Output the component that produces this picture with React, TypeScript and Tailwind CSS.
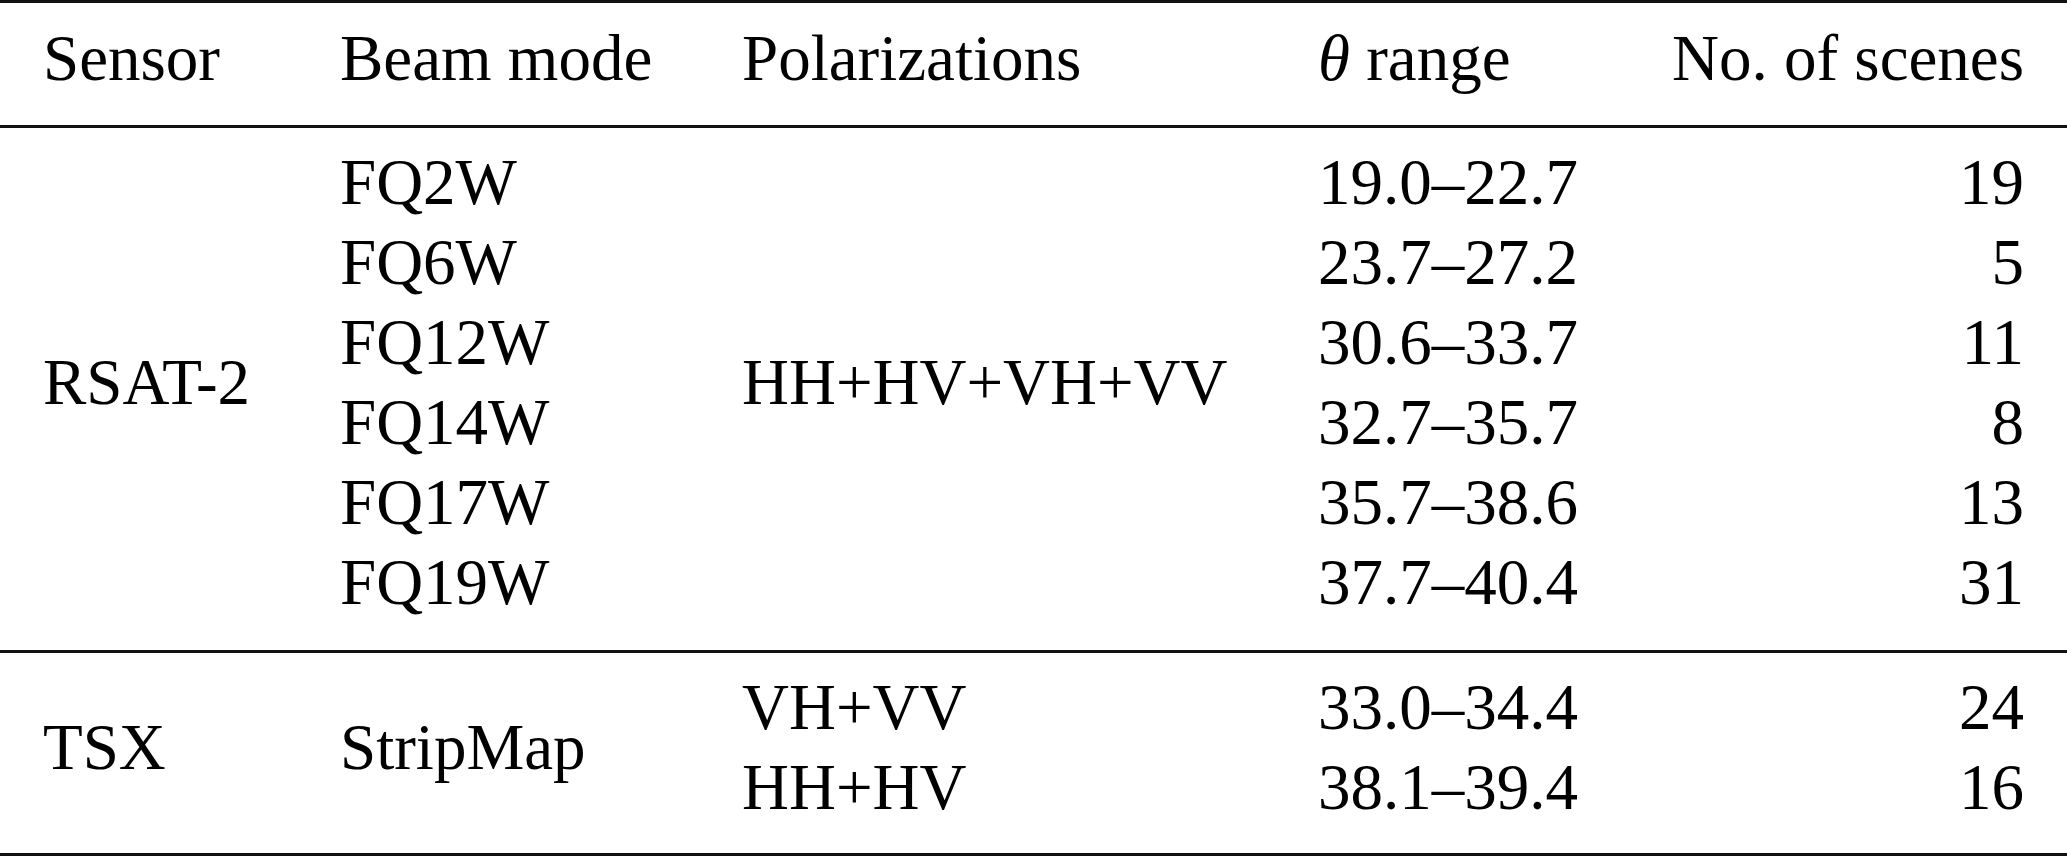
const rsat = [
  { mode: "FQ2W", range: "19.0–22.7", n: 19 },
  { mode: "FQ6W", range: "23.7–27.2", n: 5 },
  { mode: "FQ12W", range: "30.6–33.7", n: 11 },
  { mode: "FQ14W", range: "32.7–35.7", n: 8 },
  { mode: "FQ17W", range: "35.7–38.6", n: 13 },
  { mode: "FQ19W", range: "37.7–40.4", n: 31 },
];

const tsx = [
  { pol: "VH+VV", range: "33.0–34.4", n: 24 },
  { pol: "HH+HV", range: "38.1–39.4", n: 16 },
];

// column template shared by header and body sections
const cols = "grid grid-cols-[297px_402px_576px_1fr_auto]";

function Rule() {
  return <div className="h-[3px] w-full bg-[#111]" />;
}

export default function App() {
  return (
    <div className="h-[857px] w-[2067px] bg-white font-['Liberation_Serif',serif] text-[65px] leading-[80px] text-black">
      <Rule />

      {/* header */}
      <div className={`${cols} px-[43px] pt-[15px] pb-[27px]`}>
        <div>Sensor</div>
        <div>Beam mode</div>
        <div>Polarizations</div>
        <div>
          <span className="italic">θ</span> range
        </div>
        <div className="text-right">No. of scenes</div>
      </div>

      <Rule />

      {/* RSAT-2 block */}
      <div className={`${cols} grid-rows-[repeat(6,80px)] px-[43px] pt-[14px] pb-[28px]`}>
        <div className="row-span-6 flex items-center">RSAT-2</div>
        {rsat.map((r, i) => (
          <div key={r.mode} className="col-start-2" style={{ gridRow: i + 1 }}>
            {r.mode}
          </div>
        ))}
        <div className="col-start-3 row-span-6 row-start-1 flex items-center">
          HH+HV+VH+VV
        </div>
        {rsat.map((r, i) => (
          <div key={r.range} className="col-start-4" style={{ gridRow: i + 1 }}>
            {r.range}
          </div>
        ))}
        {rsat.map((r, i) => (
          <div key={r.mode + "n"} className="col-start-5 text-right" style={{ gridRow: i + 1 }}>
            {r.n}
          </div>
        ))}
      </div>

      <Rule />

      {/* TSX block */}
      <div className={`${cols} grid-rows-[repeat(2,80px)] px-[43px] pt-[14px] pb-[26px]`}>
        <div className="row-span-2 flex items-center">TSX</div>
        <div className="row-span-2 flex items-center">StripMap</div>
        {tsx.map((r, i) => (
          <div key={r.pol} className="col-start-3" style={{ gridRow: i + 1 }}>
            {r.pol}
          </div>
        ))}
        {tsx.map((r, i) => (
          <div key={r.range} className="col-start-4" style={{ gridRow: i + 1 }}>
            {r.range}
          </div>
        ))}
        {tsx.map((r, i) => (
          <div key={r.pol + "n"} className="col-start-5 text-right" style={{ gridRow: i + 1 }}>
            {r.n}
          </div>
        ))}
      </div>

      <Rule />
    </div>
  );
}
